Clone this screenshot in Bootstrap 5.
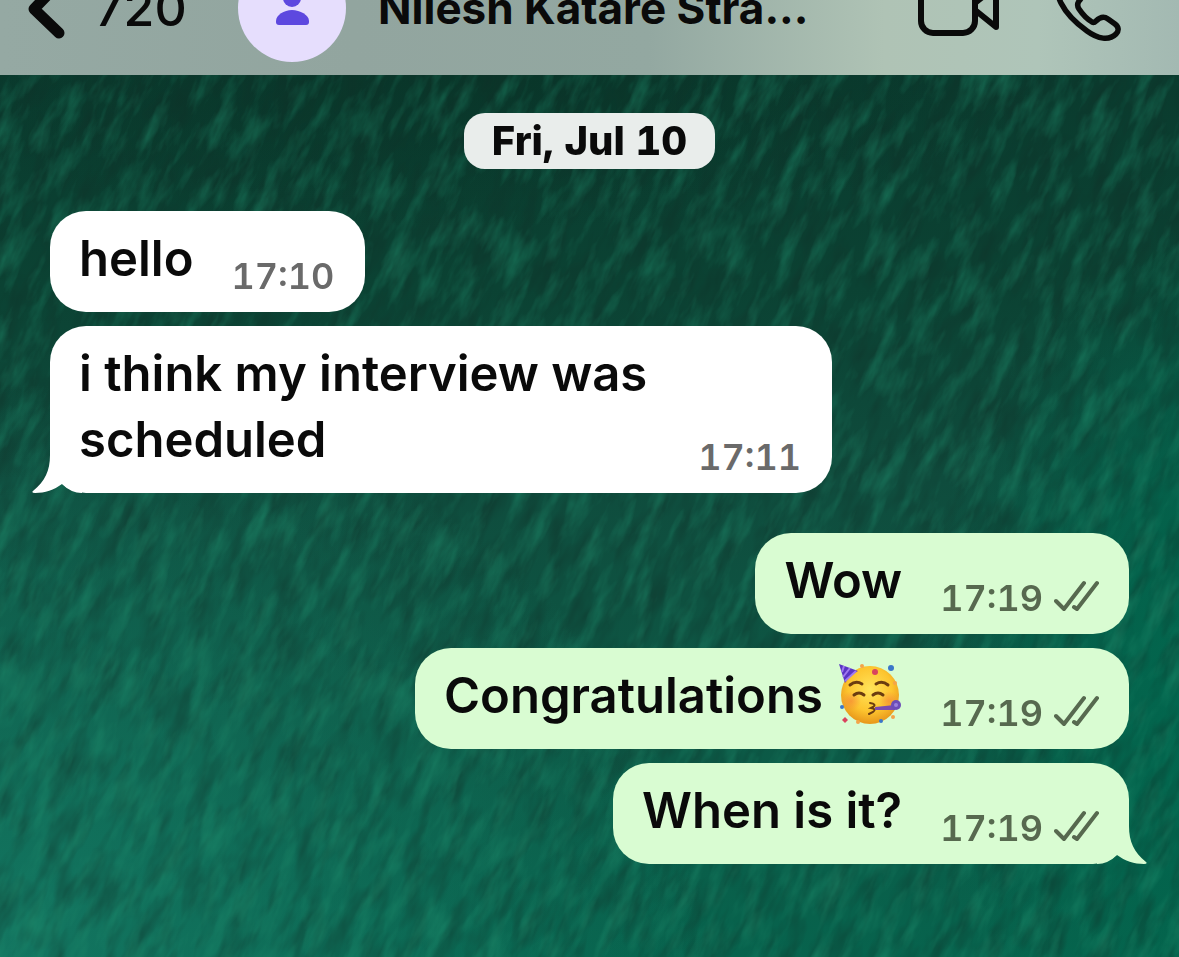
<!DOCTYPE html>
<html lang="en">
<head>
<meta charset="utf-8">
<meta name="viewport" content="width=device-width, initial-scale=1">
<title>Chat</title>
<link href="https://cdn.jsdelivr.net/npm/bootstrap@5.3.0/dist/css/bootstrap.min.css" rel="stylesheet">
<style>
  body { font-family: Inter, "Liberation Sans", sans-serif; font-weight: 500; color: #0a0a0a; background: #0d4a39; }
  .wallpaper { z-index: -1;
    background:
      radial-gradient(ellipse 30% 50% at 108% 72%, #006a50 0%, #02654dcc 50%, transparent 100%),
      radial-gradient(ellipse 50% 16% at 40% 8%, #08302480 0%, transparent 100%),
      radial-gradient(ellipse 60% 60% at 0% 100%, #137560 0%, transparent 100%),
      linear-gradient(180deg, #0a3b2e 8%, #0b4233 30%, #0f4c3d 50%, #0d5845 75%, #07634d 100%); }
  .chat-header { height: 75px; background: linear-gradient(90deg, #95a9a3 0%, #92a59f 30%, #93a8a1 55%, #afc3b5 75%, #afc5b9 88%, #a3b9b2 100%); }
  .header-row { height: 108px; margin-top: -46px; padding: 0 57px 0 26px; }
  .back-link { gap: 29px; width: 212px; font-size: 50px; line-height: 60px; color: inherit; }
  .avatar { width: 108px; height: 108px; background: #e6defd; }
  .contact { font-size: 44px; line-height: 48px; padding-left: 32px; }
  .icon-btn { color: #0a0a0a; line-height: 1; }
  .call-actions { gap: 51px; }
  .chat-body { padding: 38px 50px 94px; }
  .date-pill { font-size: 40px; line-height: 56px; padding: 0 28px; border-radius: 21px; background: #e9edeb; font-weight: 800; font-variant-numeric: tabular-nums; }
  .thread { gap: 14px; margin-top: 42px; }
  .bubble { gap: 38px; max-width: 782px; padding: 15px 31px 18px 29px; border-radius: 36px; background: #fff; }
  .bubble-sent { background: #d9fcd2; padding-right: 29px; }
  .bubble-text { font-size: 49px; line-height: 66px; margin-bottom: 2px; font-weight: 600; }
  .stamp { font-size: 36px; line-height: 36px; color: #6a6a6a; font-weight: 600; font-variant-numeric: tabular-nums; }
  .bubble-sent .stamp { color: #57694f; gap: 11px; }
  .first-sent { margin-top: 26px; }
  .tail { bottom: 0; height: 60px; width: 50px; }
  .tail-in { left: -18px; }
  .tail-out { right: -18px; }
  .emoji { margin: -12px 0 0 3px; }
</style>
</head>
<body>
<svg class="wallpaper position-fixed top-0 start-0 w-100 h-100" aria-hidden="true">
  <filter id="ripples" x="0" y="0" width="100%" height="100%" color-interpolation-filters="sRGB">
    <feTurbulence type="fractalNoise" baseFrequency="0.07 0.02" numOctaves="4" seed="8"/>
    <feColorMatrix values="0 0 0 0 .12  0 0 0 0 .56  0 0 0 0 .43  1 0 0 0 -.44"/>
  </filter>
  <filter id="shade" x="0" y="0" width="100%" height="100%" color-interpolation-filters="sRGB">
    <feTurbulence type="fractalNoise" baseFrequency="0.06 0.02" numOctaves="3" seed="21"/>
    <feColorMatrix values="0 0 0 0 .06  0 0 0 0 .18  0 0 0 0 .15  .9 0 0 0 -.36"/>
  </filter>
  <g transform="rotate(24)">
    <rect x="-100" y="-600" width="1800" height="1700" filter="url(#shade)"/>
    <rect x="-100" y="-600" width="1800" height="1700" filter="url(#ripples)"/>
  </g>
</svg>

<header class="chat-header overflow-hidden">
  <div class="header-row d-flex align-items-center">
    <a href="#" class="back-link d-flex align-items-center flex-shrink-0 text-decoration-none" aria-label="Back, 720 unread">
      <svg width="40" height="62" viewBox="0 0 40 62" fill="none" stroke="currentColor" stroke-width="11" stroke-linecap="round" stroke-linejoin="round" aria-hidden="true"><path d="M33 6 8 32l25 24"/></svg>
      <span>720</span>
    </a>
    <div class="avatar rounded-circle flex-shrink-0">
      <svg width="108" height="108" viewBox="0 0 108 108" fill="#5d48df" aria-hidden="true"><circle cx="54" cy="44" r="9"/><path d="M38 67c0-6 8-11 16-11s17 5 17 11v1q0 3-3 3H41q-3 0-3-3z"/></svg>
    </div>
    <div class="contact fw-bold text-nowrap">Nilesh Katare Stra...</div>
    <div class="call-actions d-flex align-items-center ms-auto">
      <button type="button" class="icon-btn btn border-0 p-0" aria-label="Video call">
        <svg width="84" height="60" viewBox="0 0 84 60" fill="none" stroke="currentColor" stroke-width="6" stroke-linejoin="round" aria-hidden="true"><rect x="4" y="4" width="54" height="51" rx="12"/><path d="M58 25 79 8v41L58 32"/></svg>
      </button>
      <button type="button" class="icon-btn btn border-0 p-0" aria-label="Voice call">
        <svg width="70" height="70" viewBox="0 0 70 70" fill="none" stroke="currentColor" stroke-width="5.500" stroke-linejoin="round" aria-hidden="true"><path d="M10 10c5-6 10-5 13 0l6 9c2 4 1 6-2 9-2 3-2 5 0 8 4 6 8 10 13 13q2 1 4-1c4-4 8-5 12-2l7 5c4 3 4 7 1 10-7 7-18 5-29-3C21 48 14 40 9 30 5 22 5 15 10 10z"/></svg>
      </button>
    </div>
  </div>
</header>

<main class="chat-body">
  <div class="d-flex justify-content-center"><div class="date-pill">Fri, Jul 10</div></div>
  <div class="thread d-flex flex-column">
    <div class="bubble d-flex align-items-end align-self-start">
      <div class="bubble-text">hello</div>
      <time class="stamp">17:10</time>
    </div>
    <div class="bubble position-relative d-flex align-items-end align-self-start">
      <svg class="tail tail-in position-absolute" viewBox="0 0 50 60" fill="#fff" aria-hidden="true"><path d="M18 0v22C18 38 13 48 1 58q-2 2 2 2C13 60 22 57 30 51Q39 60 50 60V0z"/></svg>
      <div class="bubble-text flex-grow-1 position-relative">i think my interview was scheduled</div>
      <time class="stamp">17:11</time>
    </div>
    <div class="bubble bubble-sent first-sent d-flex align-items-end align-self-end">
      <div class="bubble-text">Wow</div>
      <div class="stamp d-flex"><time>17:19</time><svg width="46" height="36" viewBox="0 0 46 36" fill="none" stroke="currentColor" stroke-width="4" stroke-linecap="round" stroke-linejoin="round" role="img" aria-label="Delivered"><path d="M2 21l8 8L30 3M20 27l3 2L43 3"/></svg></div>
    </div>
    <div class="bubble bubble-sent d-flex align-items-end align-self-end">
      <div class="bubble-text text-nowrap">Congratulations
        <svg class="emoji" width="64" height="62" viewBox="0 0 64 62" role="img" aria-label="Partying face">
          <defs>
            <radialGradient id="face" cx=".5" cy=".4" r=".58"><stop offset="0" stop-color="#ffe45a"/><stop offset=".65" stop-color="#fdc52f"/><stop offset="1" stop-color="#e99a1c"/></radialGradient>
            <radialGradient id="blush"><stop offset="0" stop-color="#f4803a" stop-opacity=".6"/><stop offset="1" stop-color="#f4803a" stop-opacity="0"/></radialGradient>
          </defs>
          <circle cx="32" cy="32" r="29" fill="url(#face)"/>
          <circle cx="13" cy="38" r="10" fill="url(#blush)"/><circle cx="51" cy="38" r="10" fill="url(#blush)"/>
          <path d="M1 1 20 8Q12 12 7 20z" fill="#5a35c4"/>
          <path d="M6 3 4 9M12 5 5 14M18 8 7 18" stroke="#a07af0" stroke-width="2"/>
          <g fill="none" stroke="#6b3d10" stroke-width="3" stroke-linecap="round"><path d="M12 22q6-5 12-1M38 21q6-4 12 1M16 32q5-4 10 0M35 32q5-4 10 0"/><path d="M32 40q7 1 3 4l-2 1q6 1 2 4l-4 2" stroke-width="2"/></g>
          <path d="M37 44l20-2v5l-20 0z" fill="#7b4bb0"/><circle cx="58" cy="42" r="5" fill="#6c4db8"/><circle cx="58" cy="42" r="2" fill="#9b80dd"/>
          <g fill="#d9435e"><circle cx="37" cy="9" r="3"/><path d="M7 54l3 3-3 3-3-3z"/></g>
          <g fill="#3b76c9"><circle cx="53" cy="5" r="3"/><circle cx="4" cy="44" r="2"/><circle cx="43" cy="58" r="2"/></g>
          <g fill="#f4a44a"><circle cx="24" cy="3" r="2"/><circle cx="57" cy="20" r="2"/><circle cx="55" cy="54" r="2"/><circle cx="20" cy="59" r="2"/></g>
        </svg>
      </div>
      <div class="stamp d-flex"><time>17:19</time><svg width="46" height="36" viewBox="0 0 46 36" fill="none" stroke="currentColor" stroke-width="4" stroke-linecap="round" stroke-linejoin="round" role="img" aria-label="Delivered"><path d="M2 21l8 8L30 3M20 27l3 2L43 3"/></svg></div>
    </div>
    <div class="bubble bubble-sent position-relative d-flex align-items-end align-self-end">
      <svg class="tail tail-out position-absolute" viewBox="0 0 50 60" fill="#d9fcd2" aria-hidden="true"><path d="M32 0v22C32 38 37 48 49 58q2 2-2 2C37 60 28 57 20 51Q11 60 0 60V0z"/></svg>
      <div class="bubble-text">When is it?</div>
      <div class="stamp d-flex position-relative"><time>17:19</time><svg width="46" height="36" viewBox="0 0 46 36" fill="none" stroke="currentColor" stroke-width="4" stroke-linecap="round" stroke-linejoin="round" role="img" aria-label="Delivered"><path d="M2 21l8 8L30 3M20 27l3 2L43 3"/></svg></div>
    </div>
  </div>
</main>
<script src="https://cdn.jsdelivr.net/npm/bootstrap@5.3.0/dist/js/bootstrap.bundle.min.js"></script>
</body>
</html>
